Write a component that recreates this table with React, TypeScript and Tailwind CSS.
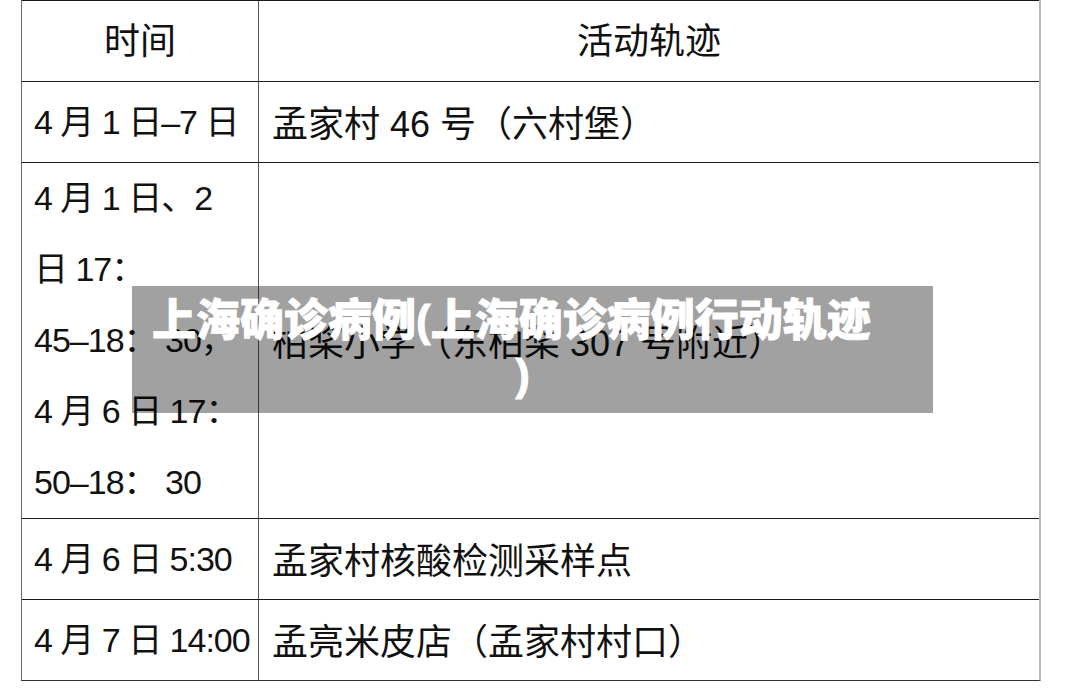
import React from "react";

const font = { fontFamily: '"Liberation Sans", "Noto Sans CJK SC", sans-serif' };

type Row = { time: string[]; place: string; h: string };

const rows: Row[] = [
  { time: ["4 月 1 日–7 日"], place: "孟家村 46 号（六村堡）", h: "h-[81px]" },
  {
    time: ["4 月 1 日、2", "日 17：", "45–18： 30，", "4 月 6 日 17：", "50–18： 30"],
    place: "柏桨小学（东柏桨 307 号附近）",
    h: "h-[356px]",
  },
  { time: ["4 月 6 日 5:30"], place: "孟家村核酸检测采样点", h: "h-[81px]" },
  { time: ["4 月 7 日 14:00"], place: "孟亮米皮店（孟家村村口）", h: "h-[81px]" },
];

export default function App() {
  return (
    <div className="relative w-[1066px] h-[700px] bg-white overflow-hidden text-[#111]" style={font}>
      <div className="ml-[21px] w-[1020px] border-l border-l-[#666] border-r-2 border-r-[#b8b8b8] border-b border-b-[#333]">
        {/* 表头 */}
        <div className="grid grid-cols-[237px_1fr] h-[81px] border-t border-t-[#1a1a1a]">
          <div className="flex items-center justify-center border-r border-r-[#555] text-[36px] leading-none pt-[2px]">
            时间
          </div>
          <div className="flex items-center justify-center text-[36px] leading-none pt-[2px]">
            活动轨迹
          </div>
        </div>

        {rows.map((r, i) => (
          <div key={i} className={`grid grid-cols-[237px_1fr] ${r.h} border-t border-t-[#1a1a1a]`}>
            <div className="flex flex-col justify-center border-r border-r-[#555] px-[12px] text-[34px]">
              {r.time.map((t, j) => (
                <div key={j} className="whitespace-pre leading-[71px] tracking-[-1px]">
                  {t}
                </div>
              ))}
            </div>
            <div className="flex items-center px-[13px] text-[36px] leading-none whitespace-nowrap pt-[6px]">
              {r.place}
            </div>
          </div>
        ))}
      </div>

      {/* 半透明标题条 */}
      <div className="absolute left-[132px] top-[286px] w-[801px] h-[127px] bg-black/[0.37] flex flex-col justify-center pb-[4px] text-white font-black text-[44px] leading-[54px] [-webkit-text-stroke:0.8px_white]">
        <div className="pl-[20px] whitespace-nowrap">上海确诊病例(上海确诊病例行动轨迹</div>
        <div className="text-center pr-[20px]">)</div>
      </div>
    </div>
  );
}
